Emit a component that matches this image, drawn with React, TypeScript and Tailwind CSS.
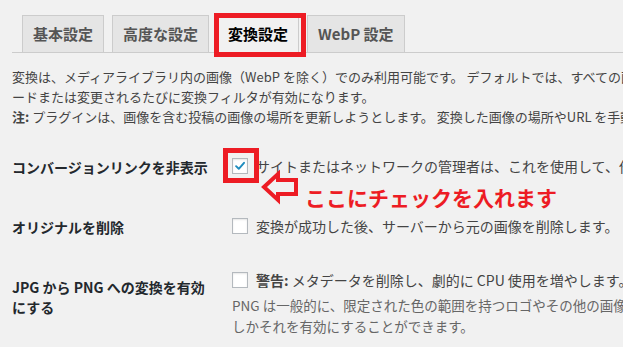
import React from 'react';

const tabs = [
  { label: '基本設定', active: false },
  { label: '高度な設定', active: false },
  { label: '変換設定', active: true },
  { label: 'WebP 設定', active: false },
];

const Checkbox: React.FC<{ checked?: boolean }> = ({ checked }) => (
  <span className="flex h-[16px] w-[16px] shrink-0 items-center justify-center border border-[#b4b9be] bg-white shadow-[inset_0_1px_2px_rgba(0,0,0,0.1)]">
    {checked && (
      <svg viewBox="0 0 16 16" className="h-[14px] w-[14px]">
        <path d="M3.5 8.2 L6.6 11.2 L12.6 4.3" fill="none" stroke="#1e8cbe" strokeWidth={2.2} strokeLinecap="round" strokeLinejoin="round" />
      </svg>
    )}
  </span>
);

export default function App() {
  return (
    <div className="relative h-[347px] w-[623px] overflow-hidden bg-[#f1f1f1] pl-[12px] font-['Noto_Sans_CJK_JP','Noto_Sans',sans-serif] text-[#444]">
      {/* Tabs */}
      <div className="flex items-end gap-[8px] border-b border-[#ccc] pl-[10px] pt-[15px]">
        {tabs.map((t) => (
          <div
            key={t.label}
            className={
              t.active
                ? '-mb-px flex h-[38px] items-center whitespace-nowrap border border-[#ccc] border-b-[#f1f1f1] bg-[#f1f1f1] px-[10px] text-[15px] font-bold text-black'
                : '-mb-px flex h-[38px] items-center whitespace-nowrap border border-[#ccc] bg-[#e5e5e5] px-[10px] text-[15px] font-bold text-[#555]'
            }
          >
            {t.label}
          </div>
        ))}
      </div>

      {/* Intro */}
      <div className="mt-[14px] whitespace-nowrap text-[13px] leading-[20px]">
        <div>変換は、メディアライブラリ内の画像（WebP を除く）でのみ利用可能です。 デフォルトでは、すべての画像がアップロ</div>
        <div>ードまたは変更されるたびに変換フィルタが有効になります。</div>
        <div>
          <span className="font-bold">注:</span> プラグインは、画像を含む投稿の画像の場所を更新しようとします。 変換した画像の場所やURL を手動で変更する
        </div>
      </div>

      {/* Settings rows */}
      <div className="mt-[10px]">
        <div className="flex h-[60px]">
          <div className="w-[220px] shrink-0 pr-[20px] pt-[20px] text-[14px] font-bold leading-[20px] text-[#23282d]">
            コンバージョンリンクを非表示
          </div>
          <div className="mt-[15px] flex h-[28px] items-center gap-[8px] whitespace-nowrap text-[14px]">
            <Checkbox checked />
            <span>サイトまたはネットワークの管理者は、これを使用して、他のユーザーから</span>
          </div>
        </div>

        <div className="flex h-[60px]">
          <div className="w-[220px] shrink-0 pr-[20px] pt-[20px] text-[14px] font-bold leading-[20px] text-[#23282d]">
            オリジナルを削除
          </div>
          <div className="mt-[15px] flex h-[28px] items-center gap-[8px] whitespace-nowrap text-[14px]">
            <Checkbox />
            <span>変換が成功した後、サーバーから元の画像を削除します。</span>
          </div>
        </div>

        <div className="flex">
          <div className="w-[220px] shrink-0 pr-[20px] pt-[20px] text-[14px] font-bold leading-[20px] text-[#23282d]">
            JPG から PNG への変換を有効
            <br />
            にする
          </div>
          <div className="pt-[15px]">
            <div className="flex h-[16px] items-center gap-[8px] whitespace-nowrap text-[14px]">
              <Checkbox />
              <span>
                <span className="font-bold">警告:</span> メタデータを削除し、劇的に CPU 使用を増やします。
              </span>
            </div>
            <div className="mt-[7px] whitespace-nowrap text-[13.5px] leading-[21px] text-[#666]">
              <div>PNG は一般的に、限定された色の範囲を持つロゴやその他の画像にのみ適しています。</div>
              <div>しかそれを有効にすることができます。</div>
            </div>
          </div>
        </div>
      </div>

      {/* Annotations */}
      <div className="absolute left-[214px] top-[13px] h-[44px] w-[92px] border-[5px] border-[#ed1c24]" />
      <div className="absolute left-[223px] top-[148px] h-[35px] w-[36px] border-[5px] border-[#ed1c24]" />
      <svg className="absolute left-[258px] top-[166px]" width="46" height="40" viewBox="0 0 46 40">
        <polygon
          points="6,21 20,8 20,14 38,14 38,28 20,28 20,34"
          fill="none"
          stroke="#ed1c24"
          strokeWidth={4}
          strokeLinejoin="miter"
        />
      </svg>
      <div className="absolute left-[305px] top-[183px] whitespace-nowrap text-[21px] font-bold leading-[28px] text-[#ed1c24]">
        ここにチェックを入れます
      </div>
    </div>
  );
}
